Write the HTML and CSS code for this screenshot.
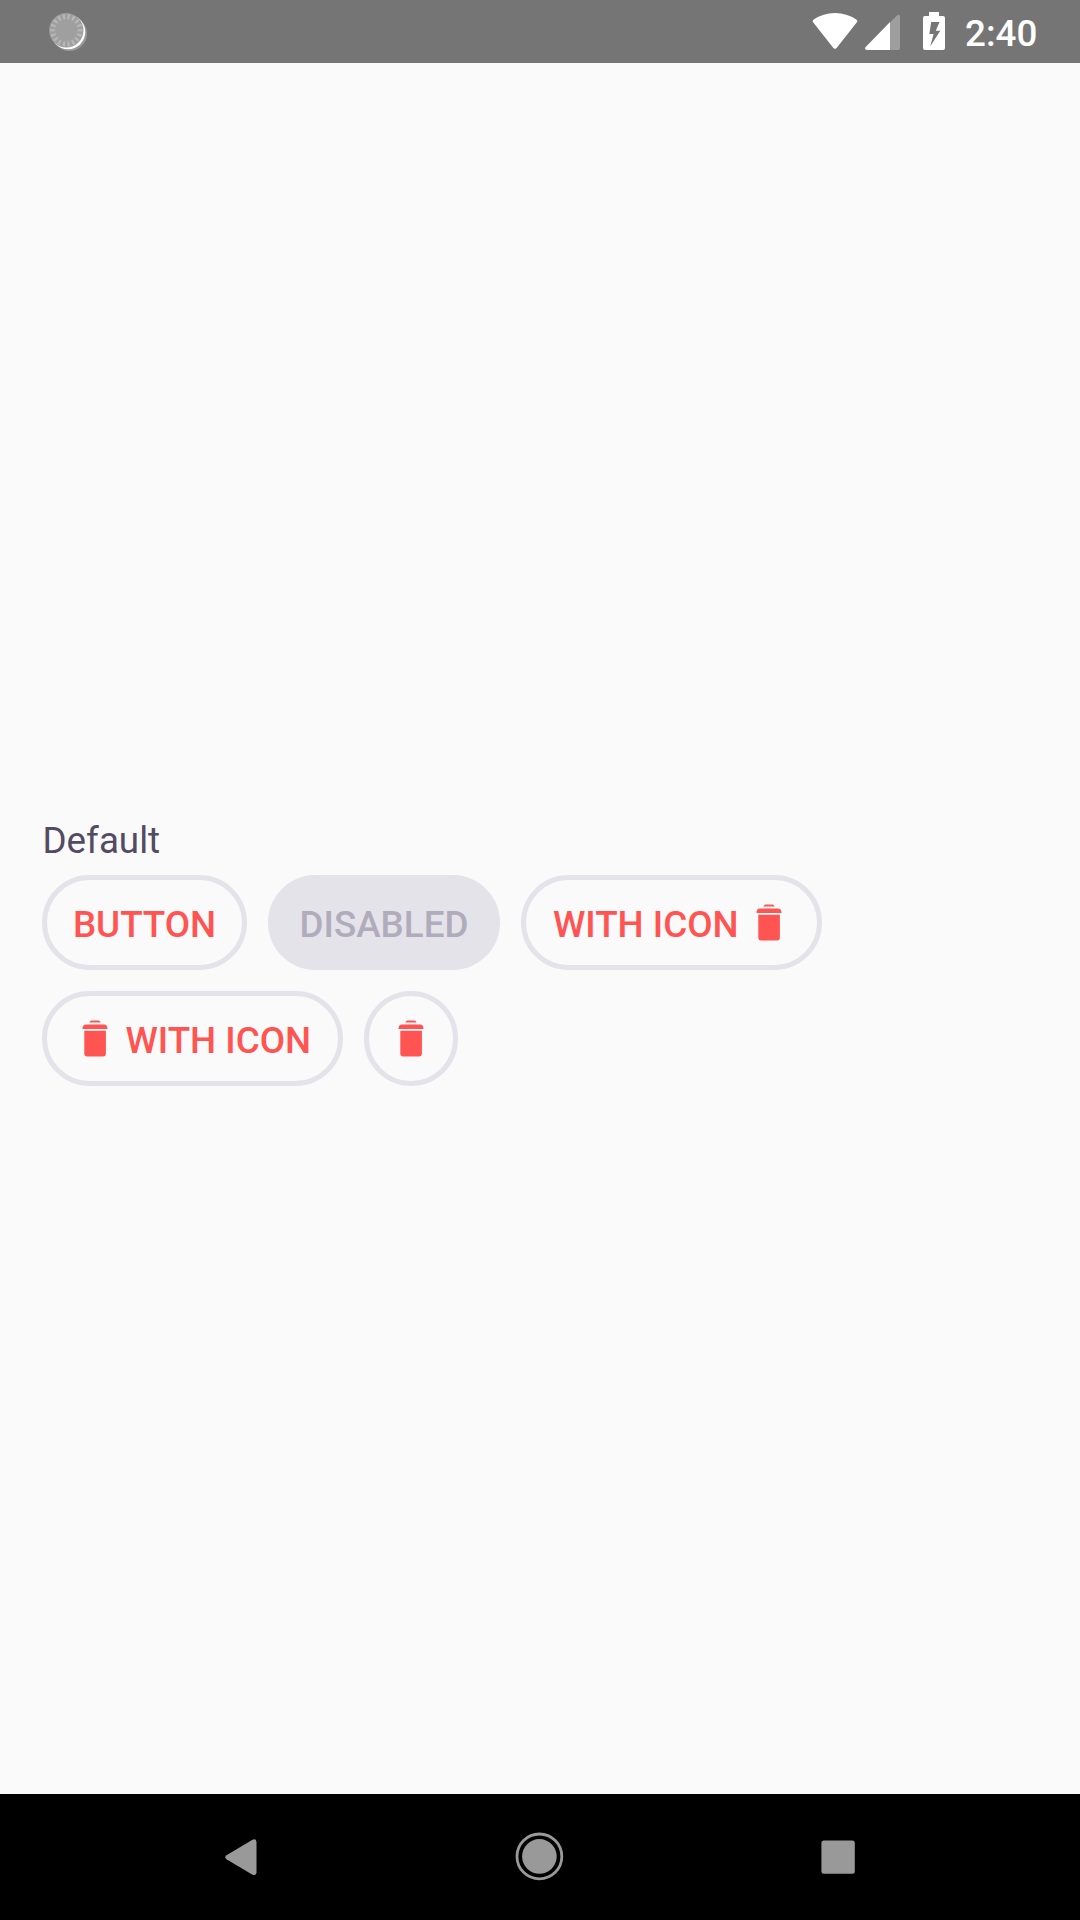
FILE: index.html
```html
<!DOCTYPE html>
<html lang="en">
<head>
<meta charset="utf-8">
<title>Buttons</title>
<link rel="stylesheet" href="styles.css">
</head>
<body>
<svg class="sprite" aria-hidden="true">
  <symbol id="trash" viewBox="0 0 42 42">
    <path d="M15.400 4.600q.6-2.100 2.200-2.100h6.800q1.600 0 2.200 2.100zM8.500 11v-.7q.3-3.800 3.400-3.800h18.200q3.100 0 3.400 3.800v.7zM10.300 12.700h21.600v22.800q0 3-3 3H13.300q-3 0-3-3z"/>
  </symbol>
</svg>
<header class="status-bar">
  <svg class="sync" viewBox="0 0 44 44">
    <circle class="sync-glow" cx="23.500" cy="23.500" r="17.500"/>
    <circle class="sync-shine" cx="22" cy="22" r="17.300"/>
    <circle class="sync-disc" cx="20.300" cy="20.300" r="17.200"/>
    <circle class="sync-ticks" cx="20.300" cy="20.300" r="13.700" pathLength="180"/>
  </svg>
  <div class="status-icons">
    <svg class="wifi" width="46" height="63" viewBox="0 0 46 63"><path d="M1.300 22.600Q-.1 20.900 1.700 19.600 11 13 23 13t21.300 6.600q1.800 1.300.4 3L24.800 47.800q-1.800 2.200-3.600 0z"/></svg>
    <svg class="cell" width="35" height="63" viewBox="0 0 35 63"><path class="dim" d="M25 22.500 32 15.500q3-2.300 3 1.500v31q0 2-2 2h-8z"/><path d="M25 22v28H2q-3.200-.5-1.300-3z"/></svg>
    <svg class="battery" width="22" height="63" viewBox="0 0 22 63"><path fill-rule="evenodd" d="M6 12h10v4h4q2 0 2 2v30q0 2-2 2H2q-2 0-2-2V18q0-2 2-2h4zM8.200 22 6.300 34h4.300L7.300 46.300 17.300 30.800h-4.500L16.500 22z"/></svg>
    <span class="clock">2:40</span>
  </div>
</header>
<main class="content">
  <h1 class="label">Default</h1>
  <div class="buttons">
    <button class="btn btn-plain"><span class="btn-text">Button</span></button>
    <button class="btn btn-disabled" disabled><span class="btn-text">Disabled</span></button>
    <button class="btn btn-wide"><span class="btn-text">With icon</span><svg class="icon"><use href="#trash"/></svg></button>
    <button class="btn btn-wide"><svg class="icon"><use href="#trash"/></svg><span class="btn-text">With icon</span></button>
    <button class="btn btn-round" aria-label="Delete"><svg class="icon"><use href="#trash"/></svg></button>
  </div>
</main>
<nav class="nav-bar">
  <svg width="60" height="60" viewBox="0 0 60 60"><path d="M14.500 28.200 40.500 12.700q3.500-1.400 4 2v31q-.5 3.400-4 2L14.500 32.200q-2.400-2 0-4z"/></svg>
  <svg width="60" height="60" viewBox="0 0 60 60"><circle cx="29.400" cy="29.400" r="17.300"/><circle class="ring" cx="29.400" cy="29.400" r="22.400"/></svg>
  <svg width="60" height="60" viewBox="0 0 60 60"><rect x="13.400" y="13.400" width="33.400" height="33.400" rx="2.500"/></svg>
</nav>
</body>
</html>
```
FILE: styles.css
```css
* { box-sizing: border-box; }

body {
  margin: 0;
  height: 1920px;
  display: flex;
  flex-direction: column;
  overflow: hidden;
  background: #fafafa;
  font-family: Roboto, "Liberation Sans", sans-serif;
  font-size: 36.75px;
}

.sprite { display: none; }

.status-bar {
  height: 63px;
  flex: none;
  display: flex;
  align-items: center;
  justify-content: space-between;
  padding: 0 42px 0 46px;
  background: #757575;
}
.sync { width: 44px; height: 44px; }
.sync-glow { fill: #999; }
.sync-shine { fill: #fff; }
.sync-disc { fill: #9f9f9f; }
.sync-ticks {
  fill: none;
  stroke: #b7b7b7;
  stroke-width: 5;
  stroke-dasharray: 4.5 5.5;
  stroke-dashoffset: 2.25;
}

.status-icons { display: flex; align-items: center; fill: #fff; }
.cell { margin-left: 7px; }
.dim { opacity: .3; }
.battery { margin-left: 23px; }
.clock {
  width: 73px;
  margin-left: 20px;
  padding-top: 4px;
  line-height: 43px;
  font-weight: 500;
  color: #fff;
  white-space: nowrap;
}

.content {
  flex: 1;
  display: flex;
  flex-direction: column;
  justify-content: center;
  padding: 48px 42px 0;
}
.label {
  margin: 0 0 13px;
  padding-left: .5px;
  font-size: 36.75px;
  font-weight: 400;
  line-height: 43px;
  color: #524b63;
}
.buttons {
  display: flex;
  flex-wrap: wrap;
  gap: 21px;
  width: 800px;
}
.btn {
  height: 95px;
  display: flex;
  align-items: center;
  justify-content: center;
  gap: 9.5px;
  padding: 0;
  border: 5px solid #e4e3e9;
  border-radius: 48px;
  background: transparent;
  color: #ff5452;
  font: 500 36.75px/43px Roboto, "Liberation Sans", sans-serif;
  text-transform: uppercase;
  white-space: nowrap;
}
.btn-text { padding-top: 4px; }
.btn-plain { width: 205px; }
.btn-disabled { width: 232px; background: #e4e3e9; color: #b0acbc; }
.btn-wide { width: 301px; }
.btn-round { width: 94px; }
.icon { width: 42px; height: 42px; flex: none; fill: currentColor; }

.nav-bar {
  height: 126px;
  flex: none;
  display: flex;
  align-items: center;
  justify-content: center;
  gap: 238px;
  background: #000;
  fill: #999;
}
.ring { fill: none; stroke: #999; stroke-width: 2.800; }
```
